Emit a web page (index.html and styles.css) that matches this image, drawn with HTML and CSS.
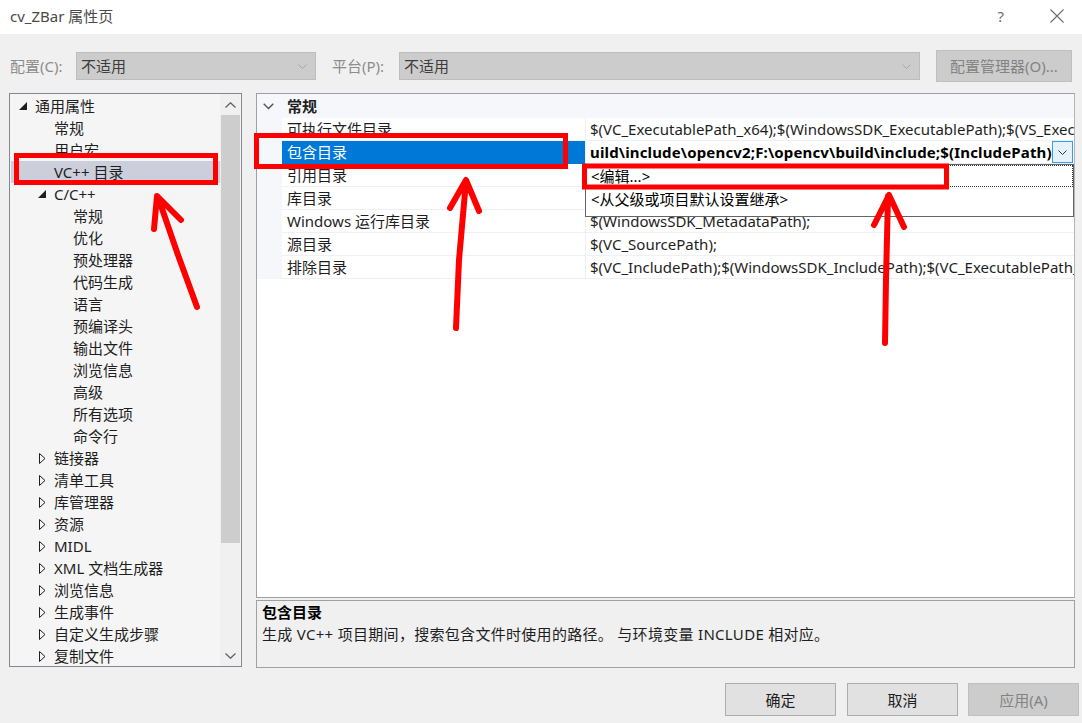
FILE: index.html
```html
<!DOCTYPE html>
<html lang="zh-CN">
<head>
<meta charset="utf-8">
<title>cv_ZBar 属性页</title>
<link rel="stylesheet" href="styles.css">
</head>
<body>
<div class="window">
  <div class="titlebar">
    <span class="title">cv_ZBar 属性页</span>
    <span class="help">?</span>
    <svg class="close" width="14" height="14" viewBox="0 0 14 14"><path d="M0.5 0.5 L13.5 13.5 M13.5 0.5 L0.5 13.5" stroke="#6e6e6e" stroke-width="1.1" fill="none"/></svg>
  </div>

  <div class="toolbar">
    <span class="tlabel">配置(C):</span>
    <div class="combo combo-cfg"><span class="combo-text">不适用</span><svg class="combo-chev" width="9" height="5" viewBox="0 0 9 5"><path d="M0.5 0.5 L4.5 4.5 L8.5 0.5" stroke="#a8a8a8" fill="none"/></svg></div>
    <span class="tlabel tlabel-plat">平台(P):</span>
    <div class="combo combo-plat"><span class="combo-text">不适用</span><svg class="combo-chev" width="9" height="5" viewBox="0 0 9 5"><path d="M0.5 0.5 L4.5 4.5 L8.5 0.5" stroke="#a8a8a8" fill="none"/></svg></div>
    <div class="btn btn-disabled btn-cfgmgr">配置管理器(O)...</div>
  </div>

  <div class="main">
    <div class="tree">
      <div class="tree-items">
        <div class="node l0"><span class="exp"><svg width="8" height="8" viewBox="0 0 8 8"><polygon points="8,0 8,8 0,8" fill="#1e1e1e"/></svg></span><span>通用属性</span></div>
        <div class="node l1"><span class="exp"></span><span>常规</span></div>
        <div class="node l1"><span class="exp"></span><span>用户宏</span></div>
        <div class="node l1 selected"><span class="exp"></span><span>VC++ 目录</span></div>
        <div class="node l1"><span class="exp"><svg width="8" height="8" viewBox="0 0 8 8"><polygon points="8,0 8,8 0,8" fill="#1e1e1e"/></svg></span><span>C/C++</span></div>
        <div class="node l2"><span class="exp"></span><span>常规</span></div>
        <div class="node l2"><span class="exp"></span><span>优化</span></div>
        <div class="node l2"><span class="exp"></span><span>预处理器</span></div>
        <div class="node l2"><span class="exp"></span><span>代码生成</span></div>
        <div class="node l2"><span class="exp"></span><span>语言</span></div>
        <div class="node l2"><span class="exp"></span><span>预编译头</span></div>
        <div class="node l2"><span class="exp"></span><span>输出文件</span></div>
        <div class="node l2"><span class="exp"></span><span>浏览信息</span></div>
        <div class="node l2"><span class="exp"></span><span>高级</span></div>
        <div class="node l2"><span class="exp"></span><span>所有选项</span></div>
        <div class="node l2"><span class="exp"></span><span>命令行</span></div>
        <div class="node l1"><span class="exp"><svg class="col" width="7" height="11" viewBox="0 0 7 11"><polygon points="0.5,0.5 6,5.5 0.5,10.5" fill="none" stroke="#1e1e1e"/></svg></span><span>链接器</span></div>
        <div class="node l1"><span class="exp"><svg class="col" width="7" height="11" viewBox="0 0 7 11"><polygon points="0.5,0.5 6,5.5 0.5,10.5" fill="none" stroke="#1e1e1e"/></svg></span><span>清单工具</span></div>
        <div class="node l1"><span class="exp"><svg class="col" width="7" height="11" viewBox="0 0 7 11"><polygon points="0.5,0.5 6,5.5 0.5,10.5" fill="none" stroke="#1e1e1e"/></svg></span><span>库管理器</span></div>
        <div class="node l1"><span class="exp"><svg class="col" width="7" height="11" viewBox="0 0 7 11"><polygon points="0.5,0.5 6,5.5 0.5,10.5" fill="none" stroke="#1e1e1e"/></svg></span><span>资源</span></div>
        <div class="node l1"><span class="exp"><svg class="col" width="7" height="11" viewBox="0 0 7 11"><polygon points="0.5,0.5 6,5.5 0.5,10.5" fill="none" stroke="#1e1e1e"/></svg></span><span>MIDL</span></div>
        <div class="node l1"><span class="exp"><svg class="col" width="7" height="11" viewBox="0 0 7 11"><polygon points="0.5,0.5 6,5.5 0.5,10.5" fill="none" stroke="#1e1e1e"/></svg></span><span>XML 文档生成器</span></div>
        <div class="node l1"><span class="exp"><svg class="col" width="7" height="11" viewBox="0 0 7 11"><polygon points="0.5,0.5 6,5.5 0.5,10.5" fill="none" stroke="#1e1e1e"/></svg></span><span>浏览信息</span></div>
        <div class="node l1"><span class="exp"><svg class="col" width="7" height="11" viewBox="0 0 7 11"><polygon points="0.5,0.5 6,5.5 0.5,10.5" fill="none" stroke="#1e1e1e"/></svg></span><span>生成事件</span></div>
        <div class="node l1"><span class="exp"><svg class="col" width="7" height="11" viewBox="0 0 7 11"><polygon points="0.5,0.5 6,5.5 0.5,10.5" fill="none" stroke="#1e1e1e"/></svg></span><span>自定义生成步骤</span></div>
        <div class="node l1"><span class="exp"><svg class="col" width="7" height="11" viewBox="0 0 7 11"><polygon points="0.5,0.5 6,5.5 0.5,10.5" fill="none" stroke="#1e1e1e"/></svg></span><span>复制文件</span></div>
      </div>
      <div class="vscroll">
        <div class="sarrow"><svg width="11" height="6" viewBox="0 0 11 6"><path d="M0.5 5.5 L5.5 0.8 L10.5 5.5" stroke="#606060" stroke-width="1.3" fill="none"/></svg></div>
        <div class="strack"><div class="sthumb"></div></div>
        <div class="sarrow"><svg width="11" height="6" viewBox="0 0 11 6"><path d="M0.5 0.5 L5.5 5.2 L10.5 0.5" stroke="#606060" stroke-width="1.3" fill="none"/></svg></div>
      </div>
    </div>

    <div class="rightcol">
      <div class="grid">
        <div class="cat">
          <span class="gut"><svg width="11" height="7" viewBox="0 0 11 7"><path d="M0.7 0.7 L5.5 5.5 L10.3 0.7" stroke="#555" stroke-width="1.4" fill="none"/></svg></span>
          <span class="cat-name">常规</span>
        </div>
        <div class="row"><span class="gut"></span><span class="name">可执行文件目录</span><span class="val">$(VC_ExecutablePath_x64);$(WindowsSDK_ExecutablePath);$(VS_ExecutablePath);$(MSBuild_ExecutablePath);$(FxCopDir);$(PATH);</span></div>
        <div class="row sel"><span class="gut"></span><span class="name">包含目录</span><span class="val"><span class="val-text">uild\include\opencv2;F:\opencv\build\include;$(IncludePath)</span><span class="ddbtn"><svg width="9" height="5" viewBox="0 0 9 5"><path d="M0.5 0.5 L4.5 4.5 L8.5 0.5" stroke="#333" fill="none"/></svg></span></span></div>
        <div class="row"><span class="gut"></span><span class="name">引用目录</span><span class="val"></span></div>
        <div class="row"><span class="gut"></span><span class="name">库目录</span><span class="val"></span></div>
        <div class="row"><span class="gut"></span><span class="name">Windows 运行库目录</span><span class="val">$(WindowsSDK_MetadataPath);</span></div>
        <div class="row"><span class="gut"></span><span class="name">源目录</span><span class="val">$(VC_SourcePath);</span></div>
        <div class="row"><span class="gut"></span><span class="name">排除目录</span><span class="val">$(VC_IncludePath);$(WindowsSDK_IncludePath);$(VC_ExecutablePath_x64);$(VC_LibraryPath_x64);</span></div>

        <div class="dropdown">
          <div class="dd-item focus">&lt;编辑...&gt;</div>
          <div class="dd-item">&lt;从父级或项目默认设置继承&gt;</div>
        </div>
      </div>
      <div class="desc">
        <div class="desc-title">包含目录</div>
        <div class="desc-text">生成 VC++ 项目期间，搜索包含文件时使用的路径。 与环境变量 INCLUDE 相对应。</div>
      </div>
    </div>
  </div>

  <div class="footer">
    <div class="btn btn-ok">确定</div>
    <div class="btn btn-cancel">取消</div>
    <div class="btn btn-disabled btn-apply">应用(A)</div>
  </div>
</div>

<svg class="annot" width="1082" height="723" viewBox="0 0 1082 723">
  <g fill="none" stroke="#ff0000" stroke-linecap="round" stroke-linejoin="round">
    <rect x="16.5" y="155.5" width="199" height="27" stroke-width="5" stroke-linecap="butt" stroke-linejoin="miter"/>
    <rect x="256.5" y="135.5" width="309" height="31" stroke-width="5" stroke-linecap="butt" stroke-linejoin="miter"/>
    <rect x="584.5" y="166" width="362" height="21" stroke-width="5" stroke-linecap="butt" stroke-linejoin="miter"/>
    <path d="M197 307 L178 255 L158 197 M154 229 L157 196 L181 220" stroke-width="6"/>
    <path d="M456 328 L459 260 L466 181 M450 208 L466 180 L479 211" stroke-width="6"/>
    <path d="M885 343 L886 280 L888 196 M874 225 L889 195 L904 227" stroke-width="6"/>
  </g>
</svg>
</body>
</html>
```

FILE: styles.css
```css
* { box-sizing: border-box; }

html, body {
  margin: 0;
  padding: 0;
}

body {
  width: 1082px;
  height: 723px;
  overflow: hidden;
  position: relative;
  background: #f0f0f0;
  font-family: "Noto Sans", "Noto Sans CJK SC", sans-serif;
  font-size: 15px;
  color: #1e1e1e;
}

.window {
  width: 1082px;
  height: 723px;
  display: flex;
  flex-direction: column;
}

/* title bar */
.titlebar {
  height: 34px;
  background: #ffffff;
  display: flex;
  align-items: center;
  padding: 0 18px 2px 10px;
}
.title {
  color: #4a4a4a;
  font-size: 15px;
  line-height: 20px;
  flex: 1;
}
.help {
  color: #6e6e6e;
  font-size: 15px;
  margin-right: 46px;
  line-height: 20px;
}
.close { display: block; }

/* toolbar */
.toolbar {
  height: 59px;
  display: flex;
  align-items: center;
  padding: 5px 0 0 10px;
}
.tlabel {
  color: #8c8c8c;
  width: 66px;
  line-height: 20px;
}
.tlabel-plat {
  margin-left: 16px;
  width: 67px;
}
.combo {
  height: 28px;
  background: #cccccc;
  border: 1px solid #bdbdbd;
  display: flex;
  align-items: center;
  padding: 0 8px 0 4px;
}
.combo-text {
  flex: 1;
  color: #3c3c3c;
  line-height: 20px;
}
.combo-cfg { width: 240px; }
.combo-plat { width: 521px; }

.btn {
  display: flex;
  align-items: center;
  justify-content: center;
  background: #e1e1e1;
  border: 1px solid #adadad;
  color: #1e1e1e;
  line-height: 20px;
}
.btn-disabled {
  background: #cccccc;
  border-color: #bfbfbf;
  color: #838383;
}
.btn-cfgmgr {
  margin-left: 16px;
  width: 136px;
  height: 32px;
}

/* main area */
.main {
  display: flex;
  height: 575px;
  padding-left: 9px;
}

.tree {
  width: 233px;
  height: 574px;
  border: 1px solid #828790;
  background: #f5f5f5;
  display: flex;
}
.tree-items {
  width: 210px;
  padding-top: 1px;
}
.node {
  height: 22px;
  display: flex;
  align-items: center;
  white-space: nowrap;
  line-height: 20px;
  color: #1e1e1e;
}
.node .exp {
  width: 16px;
  height: 22px;
  display: flex;
  align-items: center;
  flex: none;
}
.node .exp svg { display: block; margin-top: -1px; }
.node .exp svg.col { margin-left: 1px; margin-top: 0; }
.node.l0 { padding-left: 9px; }
.node.l1 { padding-left: 28px; }
.node.l2 { padding-left: 47px; }
.node.selected {
  background: #cccedb;
  margin-left: 1px;
  padding-left: 27px;
  width: 209px;
}

.vscroll {
  width: 20px;
  display: flex;
  flex-direction: column;
  background: #f0f0f0;
  margin-right: 1px;
}
.sarrow {
  height: 21px;
  display: flex;
  align-items: center;
  justify-content: center;
  flex: none;
}
.strack {
  flex: 1;
  padding: 0 0 0 1px;
}
.sthumb {
  height: 428px;
  background: #cdcdcd;
}

.rightcol {
  margin-left: 14px;
  width: 819px;
  display: flex;
  flex-direction: column;
}

/* property grid */
.grid {
  position: relative;
  height: 505px;
  background: #ffffff;
  border: 1px solid #a0a0a0;
  border-right-color: #b5b5b5;
  overflow: hidden;
}
.gut {
  width: 25px;
  flex: none;
  background: #f5f7fa;
  align-self: stretch;
}
.cat {
  height: 24px;
  display: flex;
  align-items: center;
  background: #f5f7fa;
}
.cat .gut {
  display: flex;
  align-items: center;
  justify-content: center;
  padding-right: 2px;
}
.cat-name {
  padding-left: 5px;
  font-weight: bold;
  line-height: 20px;
}
.row {
  height: 23px;
  display: flex;
  white-space: nowrap;
}
.row .name {
  width: 304px;
  flex: none;
  padding-left: 5px;
  border-bottom: 1px solid #eef0f5;
  border-right: 1px solid #eef0f5;
  line-height: 22px;
  overflow: hidden;
}
.row .val {
  flex: 1;
  min-width: 0;
  padding-left: 4px;
  border-bottom: 1px solid #eef0f5;
  line-height: 22px;
  overflow: hidden;
  display: flex;
}
.row.sel .name {
  background: #0078d7;
  color: #ffffff;
  border-bottom-color: #0078d7;
}
.row.sel .val { padding-right: 1px; }
.val-text {
  flex: 1;
  min-width: 0;
  overflow: hidden;
  font-weight: bold;
  letter-spacing: 0.15px;
  color: #000;
}
.ddbtn {
  width: 21px;
  height: 22px;
  flex: none;
  background: #e5f1fb;
  border: 1px solid #3c9be5;
  display: flex;
  align-items: center;
  justify-content: center;
}

.dropdown {
  position: absolute;
  left: 328px;
  top: 70px;
  width: 489px;
  height: 53px;
  background: #ffffff;
  border: 1px solid #646464;
  padding: 0;
}
.dd-item {
  height: 22px;
  line-height: 20px;
  padding-left: 4px;
  white-space: nowrap;
  color: #000;
  border: 1px dotted transparent;
}
.dd-item.focus {
  border-color: #333;
}
.dd-item + .dd-item { margin-top: 1px; }

/* description */
.desc {
  margin-top: 2px;
  height: 68px;
  border: 1px solid #a0a0a0;
  background: #f0f0f0;
  padding: 0 5px;
}
.desc-title {
  font-weight: bold;
  line-height: 22px;
  color: #000;
}
.desc-text {
  line-height: 22px;
  color: #1e1e1e;
  letter-spacing: 0.3px;
}

/* footer */
.footer {
  flex: 1;
  display: flex;
  justify-content: flex-end;
  align-items: flex-start;
  padding: 15px 3px 0 0;
}
.footer .btn {
  width: 111px;
  height: 33px;
}
.btn-cancel { margin-left: 11px; }
.btn-apply { margin-left: 10px; }

/* annotation overlay */
.annot {
  position: absolute;
  left: 0;
  top: 0;
  pointer-events: none;
}
```
